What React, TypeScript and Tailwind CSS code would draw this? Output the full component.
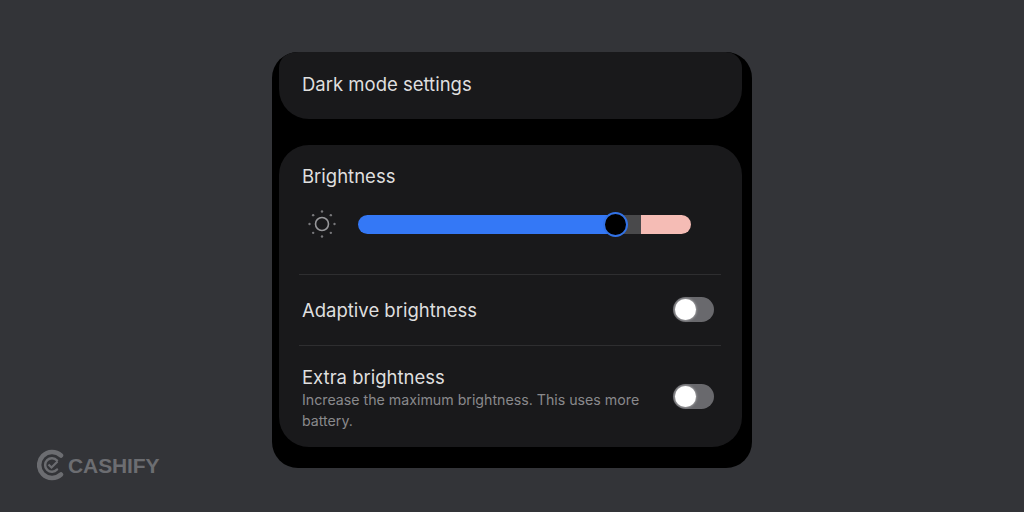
function Toggle({ className }: { className: string }) {
  return (
    <div className={`relative h-[25px] w-[41px] rounded-full bg-[#69696d] ${className}`}>
      <div className="absolute left-[2px] top-[2px] h-[21px] w-[21px] rounded-full bg-white shadow-[0_0_3px_rgba(255,255,255,0.7)]" />
    </div>
  );
}

function SunIcon() {
  const dots = [0, 45, 90, 135, 180, 225, 270, 315];
  return (
    <svg width="30" height="30" viewBox="0 0 30 30" fill="none">
      <circle cx="15" cy="15" r="6.5" stroke="#97979a" strokeWidth="1.6" />
      {dots.map((a) => (
        <circle
          key={a}
          cx={15 + 12.5 * Math.cos((a * Math.PI) / 180)}
          cy={15 + 12.5 * Math.sin((a * Math.PI) / 180)}
          r="1.2"
          fill="#77777a"
        />
      ))}
    </svg>
  );
}

function Logo() {
  return (
    <div className="absolute left-[37px] top-[449px] flex items-center gap-[1px]">
      <svg width="30" height="32" viewBox="0 0 30 32" fill="none">
        <path d="M24 6.5A13 13 0 1 0 24 25.5" stroke="#6c6d71" strokeWidth="4.5" strokeLinecap="round" />
        <path d="M20 11.5A6.8 6.8 0 1 0 20 20.5" stroke="#6c6d71" strokeWidth="2.5" strokeLinecap="round" />
        <path d="M11.5 15.5L14.5 18.5L20.5 12.5" stroke="#6c6d71" strokeWidth="2.2" />
      </svg>
      <span className="font-['Liberation_Sans',sans-serif] text-[21px] font-bold leading-none tracking-[-0.1px] text-[#6c6d71]">
        CASHIFY
      </span>
    </div>
  );
}

export default function App() {
  return (
    <div className="relative h-[512px] w-[1024px] overflow-hidden bg-[#333438] pl-[272px] pt-[52px] font-['Inter',sans-serif]">
      <div className="h-[416px] w-[480px] overflow-hidden rounded-[26px] bg-black pl-[7px] pr-[10px]">
        <div className="flex h-[67px] items-center rounded-b-[30px] rounded-t-[16px] bg-[#19191b] pb-[2px] pl-[23px] text-[18.5px] text-[#dfdfdf]">
          Dark mode settings
        </div>

        <div className="mt-[26px] h-[302px] rounded-[30px] bg-[#19191b] px-[20px] pt-[20px]">
          <div className="pl-[3px] text-[18.5px] leading-[23px] text-[#dfdfdf]">Brightness</div>

          <div className="mt-[21px] flex h-[30px] items-center pl-[8px]">
            <SunIcon />
            <div className="relative ml-[21px] flex h-[19px] w-[333px] overflow-hidden rounded-full">
              <div className="w-[257px] bg-[#3478f6]" />
              <div className="w-[26px] bg-[#49494b]" />
              <div className="flex-1 bg-[#f5bcb5]" />
            </div>
            <div className="relative -ml-[88px] h-[25px] w-[25px] rounded-full border-2 border-[#3272e6] bg-black" />
          </div>

          <div className="mt-[35px] h-px w-[422px] bg-[#2e2e30]" />

          <div className="flex h-[70px] items-center justify-between pl-[3px] pr-[8px]">
            <span className="pt-[2px] text-[18.5px] text-[#dfdfdf]">Adaptive brightness</span>
            <Toggle className="-translate-y-[1px]" />
          </div>

          <div className="h-px w-[422px] bg-[#2e2e30]" />

          <div className="flex items-center justify-between pl-[3px] pr-[8px] pt-[19px]">
            <div className="w-[350px]">
              <div className="text-[18.5px] leading-[24px] text-[#dfdfdf]">Extra brightness</div>
              <div className="pt-[1px] text-[14.2px] leading-[20.5px] text-[#89898c]">
                Increase the maximum brightness. This uses more battery.
              </div>
            </div>
            <Toggle className="-translate-y-[2px]" />
          </div>
        </div>
      </div>
      <Logo />
    </div>
  );
}
